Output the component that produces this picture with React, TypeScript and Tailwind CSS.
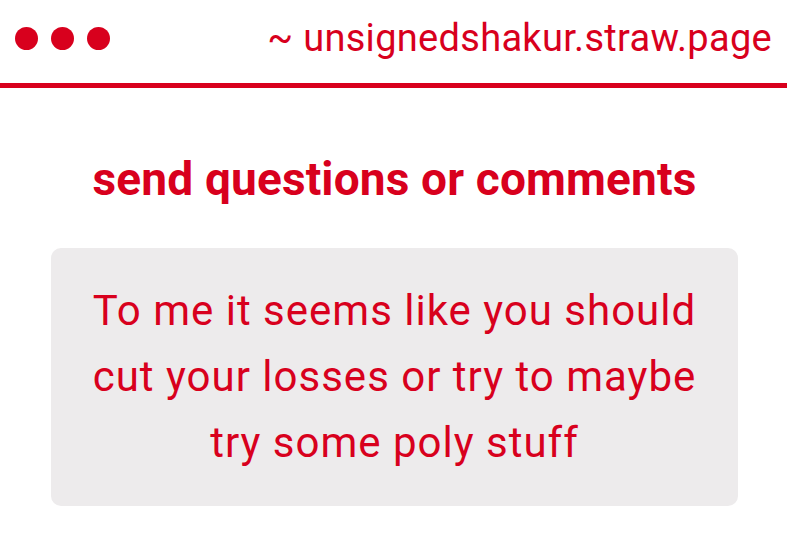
export default function App() {
  return (
    <div className="min-h-screen w-full bg-white font-['Roboto',sans-serif] text-[#d8001d]">
      {/* Window bar */}
      <header className="flex h-[83px] items-center justify-between px-[15px] pb-[7px]">
        <div className="flex gap-[13px]">
          <span className="h-[23px] w-[23px] rounded-full bg-[#d8001d]" />
          <span className="h-[23px] w-[23px] rounded-full bg-[#d8001d]" />
          <span className="h-[23px] w-[23px] rounded-full bg-[#d8001d]" />
        </div>
        <span className="text-[38px] leading-none tracking-[0.3px]">~ unsignedshakur.straw.page</span>
      </header>
      <div className="h-[5px] w-full bg-[#d8001d]" />

      <main className="flex flex-col items-center pl-[51px] pr-[49px] pt-[68px]">
        <h1 className="text-[46px] font-bold leading-none tracking-[0.15px]">send questions or comments</h1>
        <div className="mt-[46px] w-full rounded-[10px] bg-[#edebec] px-[36px] py-[30px] text-center text-[42px] leading-[66px] tracking-[1px]">
          To me it seems like you should cut your losses or try to maybe try some poly stuff
        </div>
      </main>
    </div>
  );
}
